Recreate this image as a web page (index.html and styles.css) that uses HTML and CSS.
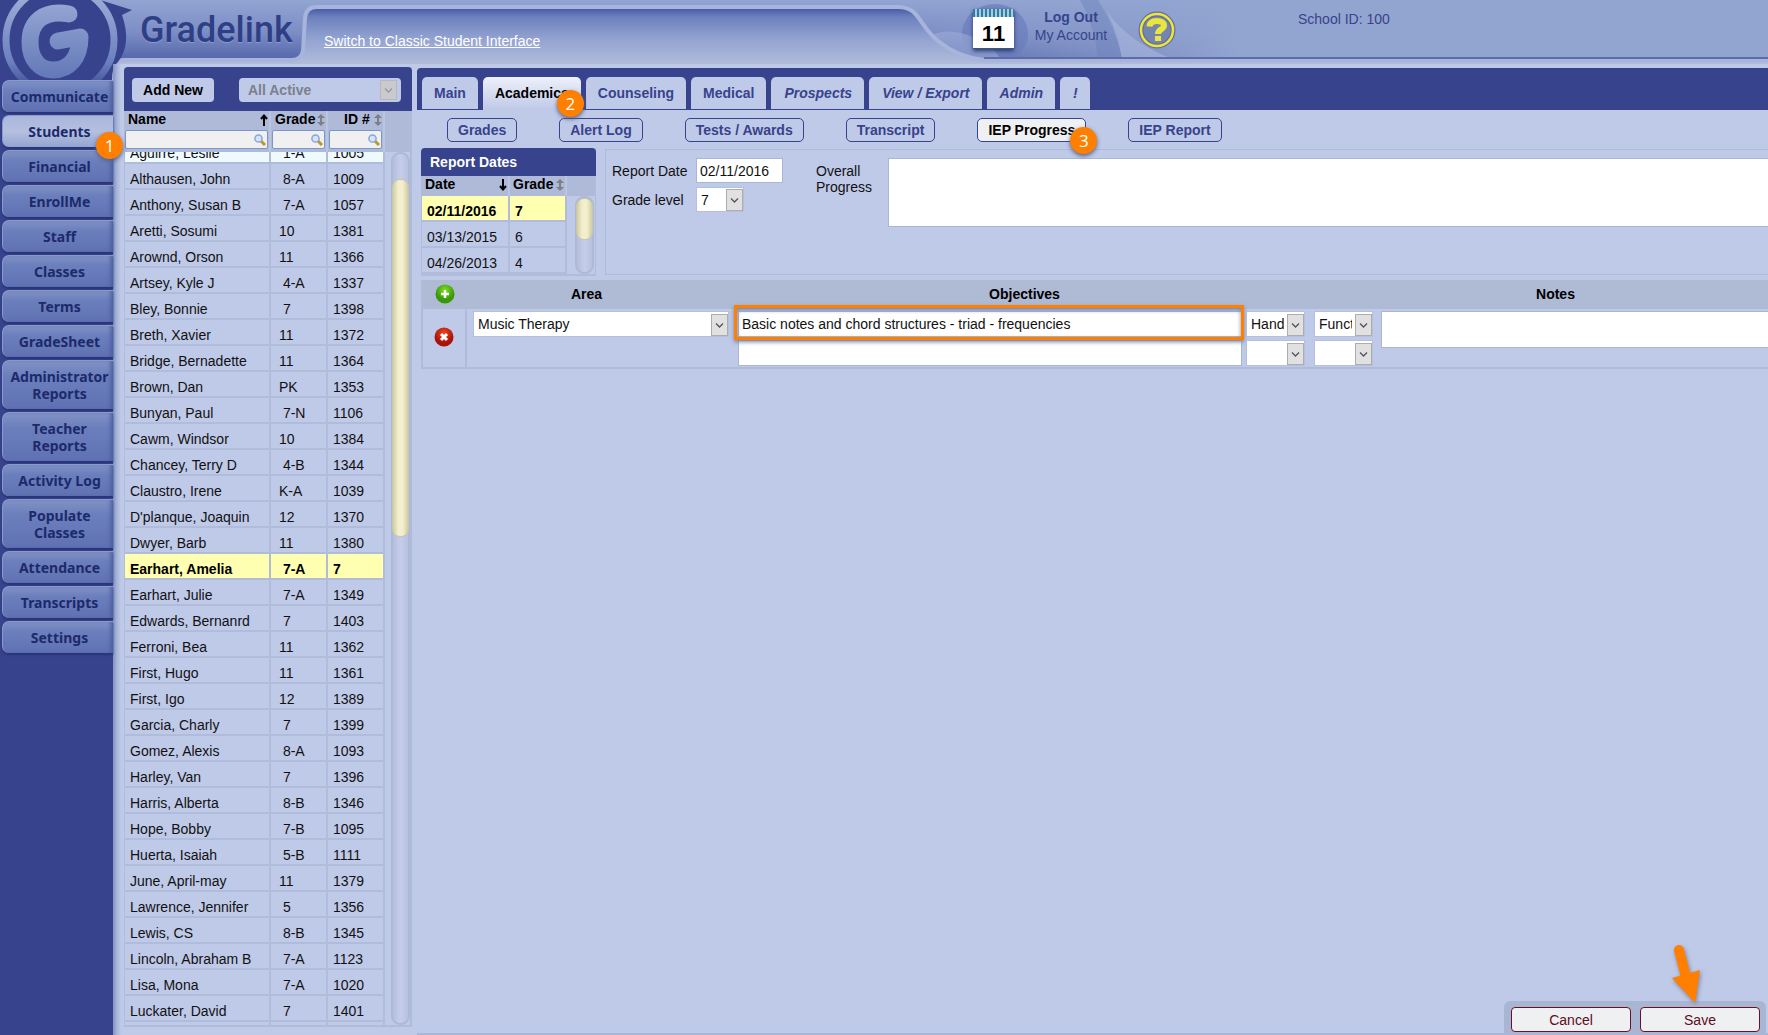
FILE: index.html
```html
<!DOCTYPE html>
<html lang="en">
<head>
<meta charset="utf-8">
<title>Gradelink - IEP Progress</title>
<link rel="stylesheet" href="styles.css">
</head>
<body>
<svg class="defs" width="0" height="0" aria-hidden="true">
  <defs>
    <symbol id="up" viewBox="0 0 8 12"><path d="M4 12V2M1 5L4 1.500L7 5" fill="none" stroke="#000" stroke-width="2"/></symbol>
    <symbol id="down" viewBox="0 0 8 12"><path d="M4 0V10M1 7L4 10.500L7 7" fill="none" stroke="#000" stroke-width="2"/></symbol>
    <symbol id="both" viewBox="0 0 8 12"><path d="M0 4L4 0L8 4H5V8H8L4 12L0 8H3V4Z" fill="#7d8085"/></symbol>
    <symbol id="lens" viewBox="0 0 12 12"><path d="M7 7L11 11" stroke="#b89a1c" stroke-width="3"/><circle cx="4.500" cy="4.500" r="3.600" fill="#d3e4fb" stroke="#8ba5dc" stroke-width="1.500"/></symbol>
  </defs>
</svg>

<svg class="backdrop" height="96" aria-hidden="true">
  <defs>
    <linearGradient id="sky" x1="0" y1="0" x2="0" y2="1"><stop offset="0" stop-color="#92a4d2"/><stop offset=".5" stop-color="#7c8ec5"/><stop offset="1" stop-color="#4f60a6"/></linearGradient>
    <linearGradient id="fade" x1="0" y1="0" x2="1" y2="0"><stop offset="0" stop-color="#92a4d0" stop-opacity="0"/><stop offset="1" stop-color="#92a4d0"/></linearGradient>
    <linearGradient id="inner" gradientUnits="userSpaceOnUse" x1="0" y1="9" x2="0" y2="64"><stop offset="0" stop-color="#4a5da8"/><stop offset=".15" stop-color="#6e81bf"/><stop offset=".55" stop-color="#93a3d1"/><stop offset="1" stop-color="#b1bcda"/></linearGradient>
    <linearGradient id="mark" gradientUnits="userSpaceOnUse" x1="0" y1="5" x2="0" y2="78"><stop offset="0" stop-color="#93a5d2"/><stop offset="1" stop-color="#6378b8"/></linearGradient>
    <linearGradient id="ring" x1="0" y1="0" x2="0" y2="1"><stop offset="0" stop-color="#a4b3da"/><stop offset=".7" stop-color="#6c80c0"/><stop offset="1" stop-color="#37438c"/></linearGradient>
  </defs>
  <rect width="100%" height="64" fill="url(#sky)"/>
  <rect x="900" width="340" height="64" fill="url(#fade)"/>
  <rect x="1239" width="100%" height="64" fill="#92a4d0"/>
  <ellipse cx="995" cy="34" rx="33" ry="30" fill="#6a7dbc" opacity=".7"/>
  <path d="M1032 0H1098Q1114 24 1122 58H1098Q1094 24 1080 0Z" fill="#6d80ba" opacity=".45"/>
  <path d="M1100 0Q1120 38 1170 58H1122Q1116 24 1100 0Z" fill="#a9b8de" opacity=".6"/>
  <path d="M930 36Q950 24 990 44L1000 58H975Q950 50 930 36Z" fill="#a3b2dc" opacity=".5"/>
  <path d="M114 96V70Q114 60 124 60H292Q301 60 303 51L305 18Q306 7 317 7H898C920 7 918 25 938 41Q958 57 984 60H4000V96Z" fill="url(#inner)"/>
  <path d="M114 96V70Q114 60 124 60H292Q301 60 303 51L305 18Q306 7 317 7H898C920 7 918 25 938 41Q958 57 984 60H4000" fill="none" stroke="#a7b5dc" stroke-width="4"/>
  <path d="M984 58H4000" stroke="#5b6ca8" stroke-width="2"/>
  <path d="M116 96V72Q116 64 124 64H4000V96Z" fill="#bfc9e8"/>
  <path d="M0 0H100L132 10L122 15Q132 44 118 62Q112 66 112 80V96H0Z" fill="#37438c"/>
  <circle cx="60" cy="40" r="54" fill="none" stroke="url(#ring)" stroke-width="7"/>
  <path d="M69 14C44 9 30 22 30 42C30 60 40 70 53 70C69 70 80 58 80 37L58 41" fill="none" stroke="url(#mark)" stroke-width="17" stroke-linecap="round" stroke-linejoin="round"/>
</svg>

<div class="page">
  <header class="header">
    <div class="brand">Gradelink</div>
    <a class="switch" href="#">Switch to Classic Student Interface</a>
    <a class="calendar" href="#" aria-label="Calendar, day 11"><span class="spiral"></span>11</a>
    <div class="account"><a class="logout" href="#">Log Out</a><a href="#">My Account</a></div>
    <a class="help" href="#" aria-label="Help"><svg width="38" height="38" viewBox="0 0 38 38"><circle cx="19" cy="19" r="16" fill="#7485ae" stroke="#67709a" stroke-width="5"/><circle cx="19" cy="19" r="16" fill="none" stroke="#eae63c" stroke-width="2.500"/><path d="M11.500 15.500C12 11 15 10 19 10C23.500 10 26 12 26 14.500C26 18.500 20 18 20 23M20 25V30" fill="none" stroke="#eae63c" stroke-width="6"/></svg></a>
    <div class="school">School ID: 100</div>
  </header>

  <nav class="nav">
    <a href="#">Communicate</a>
    <a class="active" href="#">Students<span class="badge">1</span></a>
    <a href="#">Financial</a>
    <a href="#">EnrollMe</a>
    <a href="#">Staff</a>
    <a href="#">Classes</a>
    <a href="#">Terms</a>
    <a href="#">GradeSheet</a>
    <a href="#">Administrator<br>Reports</a>
    <a href="#">Teacher<br>Reports</a>
    <a href="#">Activity Log</a>
    <a href="#">Populate<br>Classes</a>
    <a href="#">Attendance</a>
    <a href="#">Transcripts</a>
    <a href="#">Settings</a>
  </nav>

  <div class="shell">
    <section class="students">
      <div class="students-bar">
        <button class="add">Add New</button>
        <select class="filter" aria-label="Student filter" disabled><option>All Active</option></select>
      </div>
      <div class="finder">
        <div class="find"><label for="f1">Name</label><svg class="sort"><use href="#up"/></svg><div class="search"><input id="f1"><svg><use href="#lens"/></svg></div></div>
        <div class="find"><label for="f2">Grade</label><svg class="sort"><use href="#both"/></svg><div class="search"><input id="f2"><svg><use href="#lens"/></svg></div></div>
        <div class="find id"><label for="f3">ID #</label><svg class="sort"><use href="#both"/></svg><div class="search"><input id="f3"><svg><use href="#lens"/></svg></div></div>
      </div>
      <div class="list">
        <div class="rows">
        <table class="grid roster">
          <tr class="hover"><td>Aguirre, Leslie</td><td>&nbsp;1-A</td><td>1005</td></tr>
          <tr><td>Althausen, John</td><td>&nbsp;8-A</td><td>1009</td></tr>
          <tr><td>Anthony, Susan B</td><td>&nbsp;7-A</td><td>1057</td></tr>
          <tr><td>Aretti, Sosumi</td><td>10</td><td>1381</td></tr>
          <tr><td>Arownd, Orson</td><td>11</td><td>1366</td></tr>
          <tr><td>Artsey, Kyle J</td><td>&nbsp;4-A</td><td>1337</td></tr>
          <tr><td>Bley, Bonnie</td><td>&nbsp;7</td><td>1398</td></tr>
          <tr><td>Breth, Xavier</td><td>11</td><td>1372</td></tr>
          <tr><td>Bridge, Bernadette</td><td>11</td><td>1364</td></tr>
          <tr><td>Brown, Dan</td><td>PK</td><td>1353</td></tr>
          <tr><td>Bunyan, Paul</td><td>&nbsp;7-N</td><td>1106</td></tr>
          <tr><td>Cawm, Windsor</td><td>10</td><td>1384</td></tr>
          <tr><td>Chancey, Terry D</td><td>&nbsp;4-B</td><td>1344</td></tr>
          <tr><td>Claustro, Irene</td><td>K-A</td><td>1039</td></tr>
          <tr><td>D'planque, Joaquin</td><td>12</td><td>1370</td></tr>
          <tr><td>Dwyer, Barb</td><td>11</td><td>1380</td></tr>
          <tr class="selected"><td>Earhart, Amelia</td><td>&nbsp;7-A</td><td>7</td></tr>
          <tr><td>Earhart, Julie</td><td>&nbsp;7-A</td><td>1349</td></tr>
          <tr><td>Edwards, Bernanrd</td><td>&nbsp;7</td><td>1403</td></tr>
          <tr><td>Ferroni, Bea</td><td>11</td><td>1362</td></tr>
          <tr><td>First, Hugo</td><td>11</td><td>1361</td></tr>
          <tr><td>First, Igo</td><td>12</td><td>1389</td></tr>
          <tr><td>Garcia, Charly</td><td>&nbsp;7</td><td>1399</td></tr>
          <tr><td>Gomez, Alexis</td><td>&nbsp;8-A</td><td>1093</td></tr>
          <tr><td>Harley, Van</td><td>&nbsp;7</td><td>1396</td></tr>
          <tr><td>Harris, Alberta</td><td>&nbsp;8-B</td><td>1346</td></tr>
          <tr><td>Hope, Bobby</td><td>&nbsp;7-B</td><td>1095</td></tr>
          <tr><td>Huerta, Isaiah</td><td>&nbsp;5-B</td><td>1111</td></tr>
          <tr><td>June, April-may</td><td>11</td><td>1379</td></tr>
          <tr><td>Lawrence, Jennifer</td><td>&nbsp;5</td><td>1356</td></tr>
          <tr><td>Lewis, CS</td><td>&nbsp;8-B</td><td>1345</td></tr>
          <tr><td>Lincoln, Abraham B</td><td>&nbsp;7-A</td><td>1123</td></tr>
          <tr><td>Lisa, Mona</td><td>&nbsp;7-A</td><td>1020</td></tr>
          <tr><td>Luckater, David</td><td>&nbsp;7</td><td>1401</td></tr>
          <tr><td></td><td></td><td></td></tr>
        </table>
        </div>
        <div class="track"><div class="thumb"></div></div>
      </div>
    </section>

    <main class="main">
      <nav class="tabs">
        <a href="#">Main</a>
        <a class="active" href="#">Academics<span class="badge">2</span></a>
        <a href="#">Counseling</a>
        <a href="#">Medical</a>
        <a class="alt" href="#">Prospects</a>
        <a class="alt" href="#">View / Export</a>
        <a class="alt" href="#">Admin</a>
        <a class="alt" href="#">!</a>
      </nav>
      <div class="subtabs">
        <button>Grades</button>
        <button>Alert Log</button>
        <button>Tests / Awards</button>
        <button>Transcript</button>
        <button class="active">IEP Progress<span class="badge">3</span></button>
        <button>IEP Report</button>
      </div>

      <div class="report">
        <section class="dates">
          <h2>Report Dates</h2>
          <div class="dates-head"><span>Date<svg class="sort"><use href="#down"/></svg></span><span>Grade<svg class="sort"><use href="#both"/></svg></span></div>
          <div class="list">
            <div class="rows">
            <table class="grid">
              <tr class="selected"><td>02/11/2016</td><td>7</td></tr>
              <tr><td>03/13/2015</td><td>6</td></tr>
              <tr><td>04/26/2013</td><td>4</td></tr>
            </table>
            </div>
            <div class="track"><div class="thumb"></div></div>
          </div>
        </section>
        <form class="details">
          <div class="fields">
            <label for="date">Report Date</label><input id="date" class="box" value="02/11/2016">
            <label for="level">Grade level</label><select id="level" class="box"><option>7</option></select>
          </div>
          <label class="overall" for="overall">Overall Progress</label>
          <textarea id="overall" class="box"></textarea>
        </form>
      </div>

      <table class="goals">
        <colgroup><col class="c-act"><col class="c-area"><col class="c-obj"><col class="c-sel"><col class="c-sel"><col></colgroup>
        <tr>
          <th><button class="icon" aria-label="Add area"><svg width="20" height="20" viewBox="0 0 20 20"><defs><radialGradient id="g" cy=".3"><stop offset="0" stop-color="#7fe01e"/><stop offset="1" stop-color="#38980a"/></radialGradient></defs><circle cx="10" cy="10" r="9.500" fill="url(#g)"/><path d="M10 6V14M6 10H14" stroke="#fff" stroke-width="2.500"/></svg></button></th>
          <th class="h-area">Area</th>
          <th colspan="2">Objectives</th>
          <th></th>
          <th class="h-notes">Notes</th>
        </tr>
        <tr>
          <td class="act"><button class="icon" aria-label="Remove area"><svg width="20" height="20" viewBox="0 0 20 20"><defs><radialGradient id="r" cy=".3"><stop offset="0" stop-color="#ee4a1e"/><stop offset="1" stop-color="#a81208"/></radialGradient></defs><circle cx="10" cy="10" r="9.500" fill="url(#r)"/><path d="M7 7L13 13M13 7L7 13" stroke="#fff" stroke-width="3"/></svg></button></td>
          <td><select class="box" aria-label="Area"><option>Music Therapy</option></select></td>
          <td><div class="stack"><div class="callout"></div><input class="box" aria-label="Objective 1" value="Basic notes and chord structures - triad - frequencies"><input class="box" aria-label="Objective 2"></div></td>
          <td><div class="stack"><select class="box" aria-label="Method 1"><option>Hand</option></select><select class="box" aria-label="Method 2"><option></option></select></div></td>
          <td><div class="stack"><select class="box" aria-label="Level 1"><option>Functional</option></select><select class="box" aria-label="Level 2"><option></option></select></div></td>
          <td class="notes"><textarea class="box" aria-label="Notes"></textarea></td>
        </tr>
      </table>

      <div class="actions">
        <div class="buttons">
          <button>Cancel</button>
          <button>Save</button>
          <svg class="pointer" width="36" height="64" viewBox="0 0 36 64" aria-hidden="true"><path d="M11 9L18 36" stroke="#ff8000" stroke-width="10" stroke-linecap="round"/><path d="M4 37L32 29L27 62Z" fill="#ff8000"/></svg>
        </div>
      </div>
    </main>
  </div>
</div>
</body>
</html>
```

FILE: styles.css
```css
* { box-sizing: border-box; }
body {
  margin: 0;
  background: #37438c;
  font: 14px/16px "Liberation Sans", Arial, sans-serif;
  color: #111;
  overflow: hidden;
}
button, input, select, textarea { font: inherit; color: inherit; margin: 0; }
.defs { position: absolute; }
.backdrop { position: absolute; top: 0; left: 0; width: 100%; }

.page {
  position: relative;
  display: grid;
  grid-template: 64px minmax(0, 1fr) / 113px minmax(0, 1fr);
  height: 100vh;
}

/* Header */
.header { grid-column: 1 / 3; display: flex; align-items: flex-start; color: #37438c; }
.header a { color: inherit; text-decoration: none; }
.brand { width: 324px; padding: 8px 0 0 140px; font: 500 36px/44px Roboto, sans-serif; color: #2f3f86; text-shadow: 0 1px 1px #8c9dcc; }
.header .switch { width: 649px; padding-top: 33px; color: #fff; text-decoration: underline; }
.header .calendar {
  width: 41px; height: 40px; margin-top: 9px;
  background: #fff; color: #000;
  font-weight: bold; font-size: 22px; line-height: 34px; text-align: center;
  box-shadow: 0 2px 4px #2b3a70; border-bottom: 1px solid #34597a;
}
.spiral { display: block; height: 8px; background: repeating-linear-gradient(90deg, #2e7da5 0 2px, #a9cbdc 2px 4px); }
.account { display: flex; flex-direction: column; gap: 2px; width: 114px; padding-top: 9px; text-align: center; }
.header .logout { font-weight: bold; }
.help { margin: 11px 0 0 10px; height: 38px; }
.school { margin: 11px 0 0 122px; }

/* Side navigation */
.nav { display: flex; flex-direction: column; gap: 3px; padding: 16px 0 0 2px; }
.nav a {
  position: relative;
  padding: 7px 0 7px 3px;
  font: bold 14px/17px "Noto Sans", Tahoma, sans-serif;
  color: #1c2a6b; text-align: center; text-decoration: none;
  background: linear-gradient(#8092c4, #6c7fbd 30%, #5f71b2);
  border: solid #8a9bca; border-width: 1px 0 0 1px;
  border-radius: 7px 0 0 7px;
  box-shadow: 0 2px 2px #28347a, inset -4px 0 4px -2px #4a5a9c;
}
.nav a.active { background: linear-gradient(#a9b6dc, #b5c0e0 50%, #94a4d0); box-shadow: 0 2px 2px #28347a; }
.badge {
  position: absolute; z-index: 2;
  width: 27px; height: 27px; border-radius: 50%;
  background: #ff8000; color: #fff;
  font: normal 17px/27px "Open Sans", sans-serif; text-align: center;
  box-shadow: 0 2px 4px #55608a;
}
.nav .badge { right: -10px; bottom: -12px; }

/* Working area */
.shell {
  display: flex; gap: 5px; min-height: 0;
  padding: 3px 0 0 11px;
  background: linear-gradient(90deg, #8293c3, #a7b5d8 4px, #bfc9e8 8px);
}

.students { width: 288px; display: flex; flex-direction: column; margin-bottom: 8px; min-height: 0; border-right: 2px solid #afbbd9; }
.students-bar { display: flex; justify-content: space-between; height: 44px; padding: 11px 11px 9px 8px; background: #37438c; border-radius: 4px 4px 0 0; margin-right: -2px; }
.add, .filter { height: 24px; border: 0; border-radius: 4px; background-color: #bfc9e8; font-weight: bold; padding: 0; }
.add { width: 82px; color: #000; }

select {
  appearance: none;
  border: 0;
  padding: 0 20px 0 4px;
  background: #fff url("data:image/svg+xml,%3Csvg xmlns='http://www.w3.org/2000/svg' width='17' height='22'%3E%3Crect x='.5' y='.5' width='16' height='21' fill='%23e1e1e1' stroke='%23adadad'/%3E%3Cpath d='M5 9.500L8.500 13L12 9.500' fill='none' stroke='%23555' stroke-width='1.300'/%3E%3C/svg%3E") no-repeat right 0 bottom 0;
}
select.filter {
  width: 162px; padding-left: 9px; color: #7b808c; opacity: 1;
  background-color: #bfc9e8;
  background-image: url("data:image/svg+xml,%3Csvg xmlns='http://www.w3.org/2000/svg' width='17' height='20'%3E%3Crect x='.5' y='.5' width='16' height='19' fill='%23c9c9cf' stroke='%23b9b9bd'/%3E%3Cpath d='M5 8.500L8.500 12L12 8.500' fill='none' stroke='%23999' stroke-width='1.300'/%3E%3C/svg%3E");
  background-position: right 4px top 2px;
}

.finder { display: grid; grid-template-columns: 146px 57px 57px; height: 41px; padding-left: 1px; background: #afbad8; font-weight: bold; }
.find { display: flex; flex-wrap: wrap; justify-content: space-between; align-content: flex-start; border-right: 2px solid #bac5e1; padding: 0 1px 0 0; line-height: 17px; color: #000; }
.find + .find { padding-left: 1px; }
.find label { padding-left: 3px; }
.find.id label { padding-left: 15px; }
.sort { width: 8px; height: 12px; margin-top: 3px; }
.search { position: relative; width: 100%; height: 19px; margin-top: 2px; }
.search input { width: 100%; height: 19px; border: 1px solid #7b96cc; background: #f0f0f0; padding: 0 16px 0 3px; border-radius: 2px; }
.search svg { position: absolute; right: 2px; top: 4px; width: 12px; height: 12px; }

.list { display: flex; flex: 1; min-height: 0; overflow: hidden; border: solid #b0bcd9; border-width: 0 0 2px 1px; }
.rows { overflow: hidden; }
.grid { border-collapse: separate; border-spacing: 0; table-layout: fixed; }
.grid td { height: 26px; padding: 6px 0 0 5px; border: solid #b0bcd9; border-width: 0 2px 2px 0; white-space: nowrap; line-height: 18px; }
.roster { width: 260px; margin-top: -14px; }
.roster td:first-child { width: 146px; }
.roster td:nth-child(2) { width: 57px; padding-left: 8px; }
.grid .hover td { background: #effaff; }
.grid .selected td { background: #ffffb2; font-weight: bold; color: #000; }

.track { flex: none; width: 19px; margin: 0 0 0 6px; border: 2px solid #adb9d7; border-radius: 9px; background: linear-gradient(90deg, #b4bfdc, #c5cdea 50%, #b7c2de); padding-top: 25px; }
.thumb { height: 358px; margin: 0 -1px; border-radius: 8px; background: linear-gradient(90deg, #d0cda4, #f3efce 35%, #f3efce 65%, #d0cda4); border: 1px solid #c9c8a8; }

/* Main pane */
.main { position: relative; flex: 1; min-width: 0; display: flex; flex-direction: column; }
.tabs { display: flex; gap: 5px; height: 42px; margin-top: 1px; padding: 9px 5px 0; background: #37438c; border-radius: 4px 0 0 0; border-bottom: 1px solid #37438c; }
.tabs a {
  position: relative; padding: 8px 12px;
  font-weight: bold; color: #37438c; text-decoration: none; white-space: nowrap;
  background: #bfc9e8; border-radius: 5px 5px 0 0;
}
.tabs a.alt { font-style: italic; padding-left: 13px; }
.tabs a.active { color: #000; background: linear-gradient(#eef1f9, #bfc9e8); margin-bottom: -1px; }
.tabs .badge { right: -3px; top: 13px; }
.subtabs { display: flex; gap: 42px; padding: 8px 0 6px 30px; }
.subtabs button {
  position: relative; height: 24px; padding: 0 10px 1px;
  border: 1px solid #37438c; border-radius: 5px;
  background: none; color: #37438c; font-weight: bold; white-space: nowrap;
}
.subtabs button.active { background: #eff0f2; color: #000; }
.subtabs .badge { right: -12px; top: 8px; }

.report { display: flex; gap: 9px; padding-left: 4px; }
.dates { width: 175px; height: 128px; display: flex; flex-direction: column; border-right: 1px solid #b0bcd9; flex: none; }
.dates h2 { margin: 0 -1px 0 0; padding: 0 9px; font-size: 14px; line-height: 28px; color: #fff; background: #37438c; border-radius: 4px 4px 0 0; }
.dates-head { display: grid; grid-template-columns: 88px 57px; height: 20px; padding-left: 1px; background: #afbad8; font-weight: bold; line-height: 17px; color: #000; }
.dates-head span { display: flex; justify-content: space-between; padding: 0 1px 0 3px; border-right: 2px solid #bac5e1; }
.dates .grid { width: 145px; }
.dates td:first-child { width: 88px; }
.dates .track { padding: 0; margin-left: 8px; }
.dates .thumb { height: 42px; }

.details { flex: 1; min-width: 0; height: 126px; margin-top: 1px; display: flex; align-items: flex-start; padding: 8px 0 0 6px; border: 1px solid #afbbd9; border-right: 0; }
.fields { display: grid; grid-template-columns: 84px 87px; row-gap: 4px; align-items: center; }
.box { display: block; width: 100%; height: 26px; border: 1px solid #a9b6d6; border-radius: 0; outline: 0; background-color: #fff; padding: 0 3px; resize: none; }
select.box { padding: 0 20px 0 4px; border-color: #b4c0de; }
.fields .box { height: 25px; }
.fields select.box { width: 48px; }
.overall { width: 72px; margin: 5px 0 0 33px; }
.details textarea { flex: 1; height: 69px; border-right: 0; }

.goals { margin: 4px 0 0 4px; table-layout: fixed; border-spacing: 0; border: solid #afbbd9; border-width: 0 0 2px 2px; width: calc(100% - 4px); }
.c-act { width: 44px; }
.c-area { width: 269px; }
.c-obj { width: 509px; }
.c-sel { width: 68px; }
.goals th { height: 29px; padding: 0 0 2px; background: #afbad5; color: #000; }
.goals th.h-area { padding-right: 30px; }
.goals th.h-notes { padding-right: 38px; }
.goals td { padding: 2px 0 1px; vertical-align: top; }
.goals td.act { padding-bottom: 4px; border-right: 2px solid #afbbd9; text-align: center; vertical-align: middle; }
.goals td:nth-child(2) { padding: 2px 7px 0 6px; }
.goals td:nth-child(3) { padding-left: 2px; padding-right: 3px; }
.goals td:nth-child(4), .goals td:nth-child(5) { padding-left: 1px; padding-right: 8px; }
.stack { position: relative; display: flex; flex-direction: column; gap: 3px; }
.callout { position: absolute; inset: -6px -2px auto -4px; height: 35px; border: 3px solid #ff8000; box-shadow: 0 2px 4px #7a84a0, inset 0 2px 4px #7a84a0; }
.notes textarea { height: 37px; border-right: 0; }
.icon { display: inline-block; padding: 0; border: 0; background: none; height: 20px; vertical-align: middle; }

.actions { display: flex; justify-content: flex-end; margin-top: auto; padding-right: 2px; border-bottom: 2px solid #a9b6d6; }
.buttons { position: relative; display: flex; gap: 9px; padding: 6px 6px 1px 7px; background: #a9b6d3; border-radius: 6px 6px 0 0; }
.buttons button { width: 120px; height: 25px; border: 1px solid #6d1026; border-radius: 4px; background: #eff0f2; color: #5e0c22; padding: 0; }
.pointer { position: absolute; right: 62px; top: -60px; filter: drop-shadow(1px 2px 2px #7a84a0); }
```
